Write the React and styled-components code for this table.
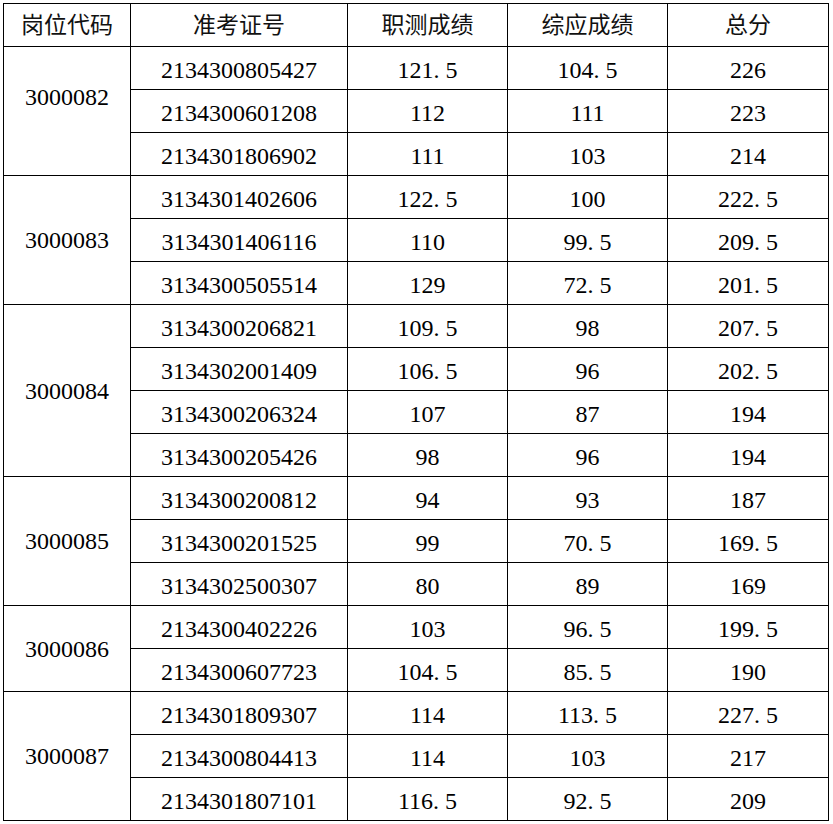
import React from 'react';
import styled, { createGlobalStyle } from 'styled-components';

const GlobalStyle = createGlobalStyle`
    body {
        margin: 0;
        background: #ffffff;
    }
`;

const Page = styled.div`
    padding: 3px 0 0 3px;
`;

const ScoreTable = styled.table`
    border-collapse: collapse;
    table-layout: fixed;
    width: 825px;
    font: 400 24px "Liberation Serif", "Noto Sans CJK SC", serif;
    color: #000;
`;

const HeadCell = styled.th`
    height: 38px;
    padding: 0 0 4px 0;
    border: 1px solid #000;
    font: 400 23px "Noto Sans CJK SC", sans-serif;
    color: #111;
    text-align: center;
    vertical-align: middle;
    line-height: 1;
`;

const Cell = styled.td`
    height: 39px;
    padding: 3px 0 0 0;
    border: 1px solid #000;
    text-align: center;
    vertical-align: middle;
    line-height: 1;
`;

// merged code cell; the first group sits a bit above its middle in the source
const CodeCell = styled.td`
    padding: 0 0 ${p => p.$lift}px 0;
    border: 1px solid #000;
    text-align: center;
    vertical-align: middle;
    line-height: 1;
`;

const Dot = styled.span`
    margin-right: 6px;
`;

const columns = [
    { title: '岗位代码', width: 127 },
    { title: '准考证号', width: 217 },
    { title: '职测成绩', width: 160 },
    { title: '综应成绩', width: 160 },
    { title: '总分', width: 161 },
];

const groups = [
    {
        code: '3000082',
        lift: 28,
        rows: [
            ['2134300805427', '121.5', '104.5', '226'],
            ['2134300601208', '112', '111', '223'],
            ['2134301806902', '111', '103', '214'],
        ],
    },
    {
        code: '3000083',
        rows: [
            ['3134301402606', '122.5', '100', '222.5'],
            ['3134301406116', '110', '99.5', '209.5'],
            ['3134300505514', '129', '72.5', '201.5'],
        ],
    },
    {
        code: '3000084',
        rows: [
            ['3134300206821', '109.5', '98', '207.5'],
            ['3134302001409', '106.5', '96', '202.5'],
            ['3134300206324', '107', '87', '194'],
            ['3134300205426', '98', '96', '194'],
        ],
    },
    {
        code: '3000085',
        rows: [
            ['3134300200812', '94', '93', '187'],
            ['3134300201525', '99', '70.5', '169.5'],
            ['3134302500307', '80', '89', '169'],
        ],
    },
    {
        code: '3000086',
        rows: [
            ['2134300402226', '103', '96.5', '199.5'],
            ['2134300607723', '104.5', '85.5', '190'],
        ],
    },
    {
        code: '3000087',
        rows: [
            ['2134301809307', '114', '113.5', '227.5'],
            ['2134300804413', '114', '103', '217'],
            ['2134301807101', '116.5', '92.5', '209'],
        ],
    },
];

// the source uses a wide decimal point, so pad it out
function Score({ value }) {
    const [whole, frac] = value.split('.');
    if (frac === undefined) return value;
    return (
        <>
            {whole}
            <Dot>.</Dot>
            {frac}
        </>
    );
}

export default function App() {
    return (
        <Page>
            <GlobalStyle />
            <ScoreTable>
                <colgroup>
                    {columns.map(c => (
                        <col key={c.title} style={{ width: c.width }} />
                    ))}
                </colgroup>
                <thead>
                    <tr>
                        {columns.map(c => (
                            <HeadCell key={c.title}>{c.title}</HeadCell>
                        ))}
                    </tr>
                </thead>
                <tbody>
                    {groups.map(g =>
                        g.rows.map((r, i) => (
                            <tr key={r[0]}>
                                {i === 0 && (
                                    <CodeCell $lift={g.lift || 0} rowSpan={g.rows.length}>
                                        {g.code}
                                    </CodeCell>
                                )}
                                <Cell>{r[0]}</Cell>
                                <Cell><Score value={r[1]} /></Cell>
                                <Cell><Score value={r[2]} /></Cell>
                                <Cell><Score value={r[3]} /></Cell>
                            </tr>
                        ))
                    )}
                </tbody>
            </ScoreTable>
        </Page>
    );
}
